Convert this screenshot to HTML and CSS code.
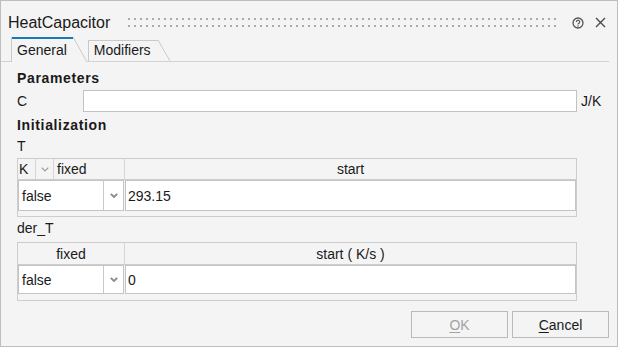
FILE: index.html
```html
<!DOCTYPE html>
<html lang="en">
<head>
<meta charset="utf-8">
<title>HeatCapacitor</title>
<link rel="stylesheet" href="styles.css">
</head>
<body>
<div class="window">
  <div class="titlebar">
    <span class="title">HeatCapacitor</span>
    <span class="grip"></span>
    <span class="icon help">
      <svg width="12" height="12" viewBox="0 0 12 12"><circle cx="6" cy="6" r="5" fill="none" stroke="#555" stroke-width="1.3"/><path d="M4.4 4.9a1.65 1.65 0 1 1 2.5 1.4c-.6.35-.9.65-.9 1.3" fill="none" stroke="#555" stroke-width="1.2"/><circle cx="6" cy="9" r=".75" fill="#555"/></svg>
    </span>
    <span class="icon close">
      <svg width="11" height="11" viewBox="0 0 11 11"><path d="M1 1L10 10M10 1L1 10" stroke="#4a4a4a" stroke-width="1.4"/></svg>
    </span>
  </div>
  <div class="tabbar">
    <div class="tab active">General</div>
    <div class="tab">Modifiers</div>
  </div>
  <div class="content">
    <div class="heading">Parameters</div>
    <div class="param-row">
      <span class="label">C</span>
      <span class="input"></span>
      <span class="unit">J/K</span>
    </div>
    <div class="heading init">Initialization</div>
    <div class="var">T</div>
    <div class="table t1">
      <div class="thead">
        <div class="th k-cell">K</div>
        <div class="th chev-cell"><svg width="8" height="5" viewBox="0 0 8 5"><path d="M.7.7L4 4 7.3.7" fill="none" stroke="#9a9a9a" stroke-width="1.2"/></svg></div>
        <div class="th fixed-cell">fixed</div>
        <div class="th start-cell">start</div>
      </div>
      <div class="trow">
        <div class="combo"><span class="combo-val">false</span><span class="combo-btn"><svg width="8" height="5" viewBox="0 0 8 5"><path d="M.8.8L4 4 7.2.8" fill="none" stroke="#8c8c8c" stroke-width="1.9"/></svg></span></div>
        <div class="cell">293.15</div>
      </div>
      <div class="strip"></div>
    </div>
    <div class="var dvar">der_T</div>
    <div class="table t2">
      <div class="thead">
        <div class="th fixed2">fixed</div>
        <div class="th start-cell">start ( K/s )</div>
      </div>
      <div class="trow">
        <div class="combo"><span class="combo-val">false</span><span class="combo-btn"><svg width="8" height="5" viewBox="0 0 8 5"><path d="M.8.8L4 4 7.2.8" fill="none" stroke="#8c8c8c" stroke-width="1.9"/></svg></span></div>
        <div class="cell">0</div>
      </div>
      <div class="strip"></div>
    </div>
  </div>
  <div class="buttons">
    <div class="btn disabled"><u>O</u>K</div>
    <div class="btn"><u>C</u>ancel</div>
  </div>
</div>
</body>
</html>
```
FILE: styles.css
```css
html, body {
  margin: 0;
  padding: 0;
  background: #f4f4f4;
}

.window {
  box-sizing: border-box;
  width: 618px;
  height: 347px;
  border: 1px solid #bdbdbd;
  background: #f4f4f4;
  font-family: "Liberation Sans", Arial, sans-serif;
  font-size: 14px;
  color: #1a1a1a;
  display: flex;
  flex-direction: column;
}

/* title bar */
.titlebar {
  box-sizing: border-box;
  height: 35px;
  padding: 8px 11px 0 7px;
  display: flex;
  align-items: center;
}

.title {
  font-size: 16px;
  line-height: 18px;
}

.grip {
  flex: 1;
  height: 9px;
  margin: 0 16px 0 18px;
  background: conic-gradient(from 270deg at 2px 2px, #ababab 25%, transparent 0) 0 0 / 6px 7px;
}

.icon {
  display: flex;
}

.icon svg {
  display: block;
}

.help {
  margin-right: 11px;
}

/* tabs */
.tabbar {
  display: flex;
  align-items: flex-end;
  height: 25px;
  padding-left: 10px;
  margin-right: 8px;
  border-bottom: 1px solid #d3d3d3;
}

.tab {
  position: relative;
  box-sizing: border-box;
  line-height: 16px;
  padding: 2px 19px 3px 5px;
  margin-left: 1px;
  border-left: 1px solid #c9c9c9;
  background: linear-gradient(#c9c9c9, #c9c9c9) 0 0 / calc(100% - 12px) 1px no-repeat;
}

.tab::after {
  content: "";
  position: absolute;
  top: 0;
  right: 0;
  bottom: 0;
  width: 12px;
  background: linear-gradient(to top right, transparent calc(50% - 0.8px), #c6c6c6 50%, transparent calc(50% + 0.8px));
}

.tab.active {
  margin-left: 0;
  padding: 5px 20px 4px 5px;
  margin-bottom: -1px;
  background: #f4f4f4 linear-gradient(#1a7ab6, #1a7ab6) 0 0 / calc(100% - 14px) 2px no-repeat;
  z-index: 1;
}

.tab.active::after {
  width: 14px;
}

/* content */
.content {
  padding: 8px 0 0 16px;
}

.heading {
  font-weight: bold;
  line-height: 16px;
  letter-spacing: 0.65px;
}

.heading.init {
  margin-top: 5px;
}

.param-row {
  margin-top: 4px;
  height: 22px;
  display: flex;
  align-items: center;
}

.label {
  width: 66px;
}

.input {
  box-sizing: border-box;
  width: 494px;
  height: 22px;
  background: #fff;
  border: 1px solid #c2c2c2;
}

.unit {
  margin-left: 4px;
}

.var {
  margin-top: 5px;
  line-height: 16px;
}

.var.dvar {
  margin-top: 3px;
}

/* tables */
.table {
  box-sizing: border-box;
  width: 560px;
  margin-top: 4px;
  border: 1px solid #cdcdcd;
}

.t2 {
  margin-top: 6px;
}

.thead {
  box-sizing: border-box;
  display: flex;
  height: 21px;
  border-bottom: 1px solid #cdcdcd;
}

.t2 .thead {
  height: 22px;
}

.th {
  box-sizing: border-box;
  display: flex;
  align-items: center;
  line-height: 16px;
  border-right: 1px solid #d6d6d6;
}

.k-cell {
  width: 18px;
  padding-left: 1px;
}

.chev-cell {
  width: 18px;
  justify-content: center;
}

.fixed-cell {
  width: 71px;
  padding-left: 3px;
}

.fixed2 {
  width: 107px;
  justify-content: center;
}

.start-cell {
  flex: 1;
  justify-content: center;
  border-right: none;
}

.trow {
  display: flex;
  gap: 1px;
  height: 31px;
}

.t2 .trow {
  height: 29px;
}

.combo {
  box-sizing: border-box;
  width: 106px;
  display: flex;
  background: #fff;
  border: 1px solid #c4c4c4;
}

.combo-val {
  flex: 1;
  display: flex;
  align-items: center;
  padding-left: 3px;
}

.combo-btn {
  box-sizing: border-box;
  width: 20px;
  display: flex;
  align-items: center;
  justify-content: center;
  border-left: 1px solid #c8c8c8;
}

.combo-btn svg {
  display: block;
}

.cell {
  box-sizing: border-box;
  flex: 1;
  display: flex;
  align-items: center;
  padding-left: 2px;
  background: #fff;
  border: 1px solid #c4c4c4;
}

.strip {
  height: 5px;
}

.t2 .strip {
  height: 6px;
}

/* buttons */
.buttons {
  margin-top: auto;
  display: flex;
  justify-content: flex-end;
  gap: 4px;
  padding: 0 8px 8px 0;
}

.btn {
  box-sizing: border-box;
  width: 97px;
  height: 27px;
  display: flex;
  align-items: center;
  justify-content: center;
  border: 1px solid #bababa;
  background: #f4f4f4;
  line-height: 16px;
}

.btn u {
  text-decoration-thickness: 1px;
  text-underline-offset: 2px;
}

.btn.disabled {
  color: #a3a3a3;
}
```
